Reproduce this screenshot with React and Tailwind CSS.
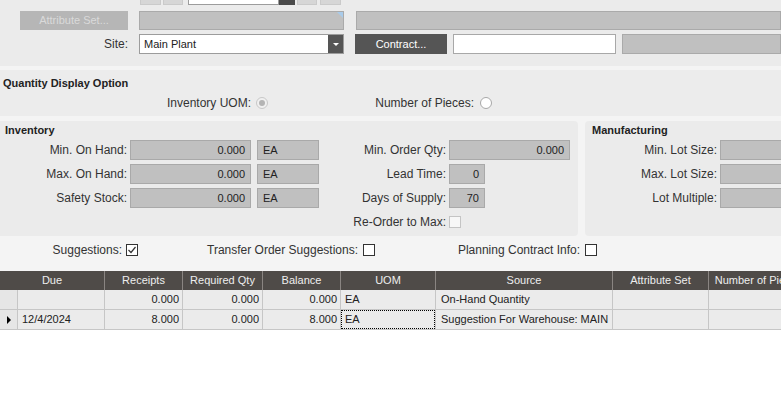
import React from 'react';

// Gray read-only field
function Field({ value = '', align = 'right', className = '' }) {
  return (
    <div
      className={`h-[20px] bg-[#c0c0c0] border border-[#a9a9a9] text-[11px] text-[#222] flex items-center px-[5px] ${align === 'right' ? 'justify-end' : 'justify-start'} ${className}`}
    >
      {value}
    </div>
  );
}

function CheckBox({ checked = false, disabled = false }) {
  return (
    <div
      className={`w-[12px] h-[12px] border flex items-center justify-center ${disabled ? 'border-[#c4c4c4] bg-[#f7f7f7]' : 'border-[#333] bg-white'}`}
    >
      {checked && (
        <svg width="10" height="10" viewBox="0 0 10 10">
          <path d="M1.5 5 L4 7.5 L8.5 2" fill="none" stroke="#333" strokeWidth="1.2" />
        </svg>
      )}
    </div>
  );
}

function Radio({ selected = false, disabled = false }) {
  return (
    <div
      className={`w-[12px] h-[12px] rounded-full border flex items-center justify-center ${disabled ? 'border-[#c8c8c8] bg-[#f0f0f0]' : 'border-[#a8a8a8] bg-white'}`}
    >
      {selected && <div className="w-[6px] h-[6px] rounded-full bg-[#b4b4b4]" />}
    </div>
  );
}

function Row({ label, labelW, children }) {
  return (
    <div className="flex items-center h-[20px]">
      <div className="shrink-0 text-right text-[12px] text-[#333] whitespace-nowrap" style={{ width: labelW }}>
        {label}
      </div>
      <div className="ml-[3px] flex items-center shrink-0">{children}</div>
    </div>
  );
}

const headCols = [
  { t: 'Due', w: 'w-[105px]' },
  { t: 'Receipts', w: 'w-[78px]' },
  { t: 'Required Qty', w: 'w-[80px]' },
  { t: 'Balance', w: 'w-[78px]' },
  { t: 'UOM', w: 'w-[95px]' },
  { t: 'Source', w: 'w-[177px]' },
  { t: 'Attribute Set', w: 'w-[96px]' },
  { t: 'Number of Pieces', w: 'w-[100px]' },
];

const rows = [
  { due: '', rec: '0.000', req: '0.000', bal: '0.000', uom: 'EA', src: 'On-Hand Quantity', current: false },
  { due: '12/4/2024', rec: '8.000', req: '0.000', bal: '8.000', uom: 'EA', src: 'Suggestion For Warehouse: MAIN', current: true },
];

export default function App() {
  return (
    <div
      className="w-[781px] h-[399px] overflow-hidden bg-[#f4f4f4] text-[#333]"
      style={{ fontFamily: '"Liberation Sans", Arial, sans-serif' }}
    >
      {/* Header panel */}
      <div className="h-[66px] bg-[#ebebeb] flex flex-col">
        {/* partially visible row */}
        <div className="flex h-[19px] -mt-[14px] items-stretch">
          <div className="ml-[140px] w-[21px] bg-[#d6d6d6] border border-[#cacaca]" />
          <div className="ml-[2px] w-[20px] bg-[#d6d6d6] border border-[#cacaca]" />
          <div className="ml-[5px] w-[91px] bg-white border border-[#9c9c9c]" />
          <div className="w-[16px] bg-[#4a4a4a]" />
          <div className="ml-[2px] w-[20px] bg-[#d6d6d6] border border-[#cacaca]" />
          <div className="ml-[3px] w-[21px] bg-[#d6d6d6] border border-[#cacaca]" />
        </div>
        <div className="flex h-[19px] mt-[6px] items-stretch">
          <div className="ml-[20px] w-[108px] bg-[#b6b6b6] text-[#dadada] text-[11px] flex items-center justify-center">
            Attribute Set...
          </div>
          <div className="relative ml-[11px] w-[205px] bg-[#c0c0c0] border border-[#aaaaaa]">
            <div className="absolute top-0 right-0 w-[6px] h-[6px] bg-[#a9cbea] [clip-path:polygon(0_0,100%_0,100%_100%)]" />
          </div>
          <div className="ml-[12px] flex-1 bg-[#c0c0c0] border border-[#aaaaaa]" />
        </div>
        <div className="flex h-[20px] mt-[4px] items-stretch">
          <div className="w-[128px] text-right text-[12px] flex items-center justify-end">Site:</div>
          <div className="ml-[11px] w-[205px] bg-white border border-[#9c9c9c] flex items-stretch">
            <div className="flex-1 text-[11px] text-[#222] flex items-center pl-[4px]">Main Plant</div>
            <div className="w-[15px] bg-[#555] flex items-center justify-center">
              <div className="w-0 h-0 border-l-[3px] border-r-[3px] border-t-[3px] border-l-transparent border-r-transparent border-t-white" />
            </div>
          </div>
          <div className="ml-[11px] w-[92px] bg-[#555] text-white text-[11px] flex items-center justify-center">
            Contract...
          </div>
          <div className="ml-[6px] w-[163px] bg-white border border-[#a8a8a8]" />
          <div className="ml-[6px] flex-1 bg-[#c0c0c0] border border-[#aaaaaa]" />
        </div>
      </div>

      {/* Quantity Display Option */}
      <div className="mt-[4px] h-[46px] bg-[#ececec]">
        <div className="pl-[3px] pt-[7px] text-[11px] font-bold text-[#222] leading-[13px]">Quantity Display Option</div>
        <div className="flex items-center mt-[6px] h-[14px]">
          <div className="w-[251px] text-right text-[12px]">Inventory UOM:</div>
          <div className="ml-[5px]"><Radio selected disabled /></div>
          <div className="w-[206px] text-right text-[12px]">Number of Pieces:</div>
          <div className="ml-[6px]"><Radio /></div>
        </div>
      </div>

      {/* Inventory / Manufacturing */}
      <div className="mt-[5px] flex h-[115px]">
        <div className="w-[578px] shrink-0 bg-[#ebebeb] rounded-r-[4px] pt-[3px]">
          <div className="pl-[5px] h-[16px] text-[11px] font-bold text-[#222] leading-[13px]">Inventory</div>
          <div className="flex">
            <div className="w-[319px] shrink-0 flex flex-col gap-[4px]">
              <Row label="Min. On Hand:" labelW={127}>
                <Field value="0.000" className="w-[121px]" />
                <Field value="EA" align="left" className="ml-[6px] w-[62px]" />
              </Row>
              <Row label="Max. On Hand:" labelW={127}>
                <Field value="0.000" className="w-[121px]" />
                <Field value="EA" align="left" className="ml-[6px] w-[62px]" />
              </Row>
              <Row label="Safety Stock:" labelW={127}>
                <Field value="0.000" className="w-[121px]" />
                <Field value="EA" align="left" className="ml-[6px] w-[62px]" />
              </Row>
            </div>
            <div className="flex flex-col gap-[4px]">
              <Row label="Min. Order Qty:" labelW={127}>
                <Field value="0.000" className="w-[121px]" />
              </Row>
              <Row label="Lead Time:" labelW={127}>
                <Field value="0" className="w-[36px]" />
              </Row>
              <Row label="Days of Supply:" labelW={127}>
                <Field value="70" className="w-[36px]" />
              </Row>
              <Row label="Re-Order to Max:" labelW={127}>
                <CheckBox disabled />
              </Row>
            </div>
          </div>
        </div>
        <div className="ml-[7px] flex-1 min-w-0 overflow-hidden bg-[#ebebeb] rounded-l-[4px] pt-[3px]">
          <div className="pl-[7px] h-[16px] text-[11px] font-bold text-[#222] leading-[13px]">Manufacturing</div>
          <div className="flex flex-col gap-[4px]">
            <Row label="Min. Lot Size:" labelW={132}>
              <Field className="w-[80px]" />
            </Row>
            <Row label="Max. Lot Size:" labelW={132}>
              <Field className="w-[80px]" />
            </Row>
            <Row label="Lot Multiple:" labelW={132}>
              <Field className="w-[80px]" />
            </Row>
          </div>
        </div>
      </div>

      {/* Option checkboxes */}
      <div className="flex items-center h-[28px] text-[12px]">
        <div className="w-[122px] text-right">Suggestions:</div>
        <div className="ml-[4px]"><CheckBox checked /></div>
        <div className="w-[220px] text-right">Transfer Order Suggestions:</div>
        <div className="ml-[5px]"><CheckBox /></div>
        <div className="w-[205px] text-right">Planning Contract Info:</div>
        <div className="ml-[5px]"><CheckBox /></div>
      </div>

      {/* Grid */}
      <div className="mt-[7px] bg-white h-[200px] overflow-hidden">
        <div className="flex h-[19px] bg-[#4f4b48] text-[#eeeeee] text-[11px] w-[900px]">
          {headCols.map((c) => (
            <div key={c.t} className={`${c.w} shrink-0 border-r border-[#8a8582] flex items-center justify-center whitespace-nowrap`}>
              {c.t}
            </div>
          ))}
        </div>
        {rows.map((r, i) => (
          <div key={i} className="flex h-[20px] text-[11px] text-[#222] w-[900px] border-b border-[#c6c6c6]">
            <div className="w-[18px] shrink-0 bg-[#e6e6e6] border-r border-[#c6c6c6] flex items-center justify-center">
              {r.current && (
                <div className="w-0 h-0 border-t-[4px] border-b-[4px] border-l-[4px] border-t-transparent border-b-transparent border-l-black" />
              )}
            </div>
            <div className="w-[87px] shrink-0 bg-[#ebebeb] border-r border-[#c6c6c6] flex items-center pl-[4px]">{r.due}</div>
            <div className="w-[78px] shrink-0 bg-[#ebebeb] border-r border-[#c6c6c6] flex items-center justify-end pr-[3px]">{r.rec}</div>
            <div className="w-[80px] shrink-0 bg-[#ebebeb] border-r border-[#c6c6c6] flex items-center justify-end pr-[3px]">{r.req}</div>
            <div className="w-[78px] shrink-0 bg-[#ebebeb] border-r border-[#c6c6c6] flex items-center justify-end pr-[3px]">{r.bal}</div>
            <div className="w-[95px] shrink-0 bg-[#ebebeb] border-r border-[#c6c6c6] flex items-stretch">
              <div className={`flex-1 flex items-center pl-[3px] ${r.current ? 'border border-dotted border-black' : 'border border-transparent'}`}>
                {r.uom}
              </div>
            </div>
            <div className="w-[177px] shrink-0 bg-[#ebebeb] border-r border-[#c6c6c6] flex items-center pl-[5px] whitespace-nowrap">{r.src}</div>
            <div className="w-[96px] shrink-0 bg-[#ebebeb] border-r border-[#c6c6c6]" />
            <div className="w-[100px] shrink-0 bg-[#ebebeb] border-r border-[#c6c6c6]" />
          </div>
        ))}
      </div>
    </div>
  );
}
